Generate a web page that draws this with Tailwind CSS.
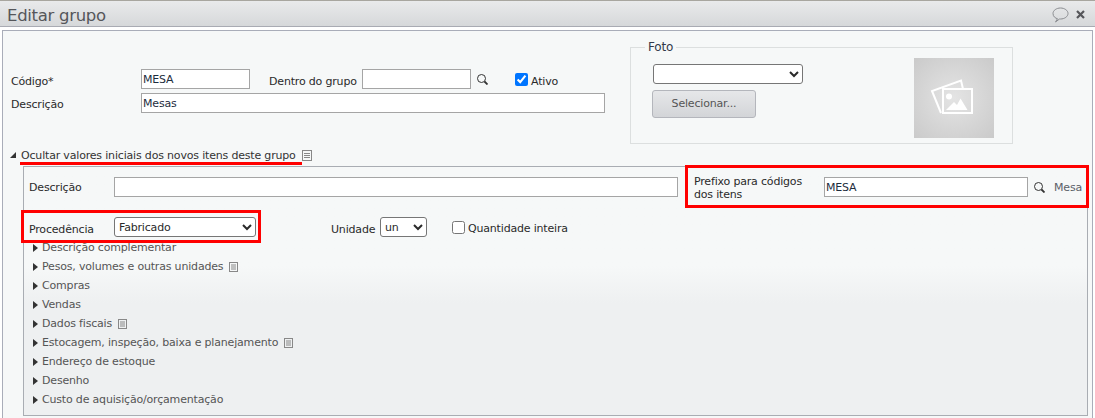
<!DOCTYPE html>
<html lang="pt-BR">
<head>
    <meta charset="UTF-8">
    <title>Editar grupo</title>
    <script src="https://cdn.jsdelivr.net/npm/@tailwindcss/browser@4"></script>
</head>
<body class="bg-white overflow-hidden h-[418px] font-['DejaVu_Sans',sans-serif] text-[11px] tracking-[-0.18px] text-[#2a2a2a]">
    <!-- barra de titulo -->
    <div class="h-[27px] border-t border-t-[#a8a69f] border-b border-b-[#a9abb3] bg-gradient-to-b from-[#e9eaeb] to-[#d6d8da] flex items-center pl-[7px] pr-[10px]">
        <span class="text-[16.5px] tracking-[-0.3px] mt-[6px] text-[#55565a]">Editar grupo</span>
        <div class="ml-auto flex items-center gap-[7px] mt-[2px]">
            <svg width="17" height="16" viewBox="0 0 17 16" fill="none" stroke="#8a8c90"><path d="M8.500 1C4.500 1 1 3.400 1 6.500s2.600 4.900 4.500 5.200L3.500 15l4-3h1c4 0 7.500-2.400 7.500-5.500S12.500 1 8.500 1z"/></svg>
            <svg width="9" height="9" viewBox="0 0 9 9" stroke="#55565a" stroke-width="2.200"><path d="M1 1l7 7M8 1l-7 7"/></svg>
        </div>
    </div>

    <div class="mt-[3px] ml-[2px] w-[1091px] h-[388px] border border-b-0 border-[#a9adb9] bg-[#f6f8f8]">
        <div class="flex h-[116px]">
            <div class="w-[627px] pl-[8px] pt-[38px]">
                <div class="flex items-center h-[20px]">
                    <span class="w-[130px] mt-[6px]">Código*</span>
                    <input value="MESA" class="w-[109px] h-[20px] border border-[#a5a5a5] bg-white px-[1px] text-[#1d2d3d] text-[11px]">
                    <span class="ml-[19px] w-[93px] mt-[6px]">Dentro do grupo</span>
                    <input class="w-[109px] h-[20px] border border-[#a5a5a5] bg-white">
                    <svg class="ml-[6px]" width="11" height="11" viewBox="0 0 11 11" fill="none" stroke="#333"><circle cx="4.500" cy="4.500" r="4"/><path d="M7.500 7.500l3 3" stroke-width="1.800"/></svg>
                    <input type="checkbox" checked class="ml-[27px] w-[13px] h-[13px] m-0">
                    <span class="ml-[3px] mt-[6px]">Ativo</span>
                </div>
                <div class="flex items-center h-[20px] mt-[4px]">
                    <span class="w-[130px] mt-[5px]">Descrição</span>
                    <input value="Mesas" class="w-[464px] h-[20px] border border-[#a5a5a5] bg-white px-[1px] text-[#1d2d3d] text-[11px]">
                </div>
            </div>
            <fieldset class="mt-[7px] w-[383px] h-[106px] border border-[#dcdfdf] relative">
                <legend class="ml-[14px] px-[3px] text-[12px] text-[#333a4a]">Foto</legend>
                <div class="pl-[22px] pt-[8px]">
                    <select class="block w-[150px] h-[20px] border border-[#767676] rounded-[3px] bg-white"></select>
                    <button class="block mt-[6px] -ml-[1px] w-[104px] h-[28px] border border-[#b4b6bc] rounded-[3px] bg-gradient-to-b from-[#e6e7e9] to-[#d3d5d8] text-[#555]">Selecionar...</button>
                </div>
                <div class="absolute left-[283px] top-[2px] w-[80px] h-[80px] bg-[radial-gradient(circle,#e4e4e4,#cacaca)]">
                    <svg width="80" height="80" viewBox="0 0 80 80" fill="none" stroke="#fff" stroke-width="2">
                        <path d="M27 55L18 33 47 22.500 49 31"/>
                        <rect x="29" y="31" width="29" height="24"/>
                        <circle cx="35" cy="38.500" r="3" fill="#fff" stroke="none"/>
                        <path d="M32 52l8-8 3 3 3.500-6.500 7 11.500z" fill="#fff" stroke="none"/>
                    </svg>
                </div>
            </fieldset>
        </div>

        <!-- valores iniciais -->
        <div class="flex items-center h-[16px] ml-[7px]">
            <span class="w-0 h-0 border-l-[6px] border-l-transparent border-b-[6px] border-b-[#333]"></span>
            <span class="ml-[5px] mt-[2px] text-[#333]">Ocultar valores iniciais dos novos itens deste grupo</span>
            <svg class="ml-[6px] mt-[1px]" width="10" height="11" viewBox="0 0 10 11" fill="none" stroke="#888"><rect x=".5" y=".5" width="9" height="10"/><path d="M2 3.500h6M2 5.500h6M2 7.500h6"/></svg>
        </div>
        <div class="ml-[20px] mt-[3px] w-[1065px] h-[250px] border border-[#a9adb3] bg-gradient-to-b from-[#f6f8f8] from-40% to-[#eef0f1] to-55%">
            <div class="flex items-center mt-[10px] pl-[5px] h-[20px]">
                <span class="w-[85px] mt-[2px]">Descrição</span>
                <input class="w-[564px] h-[20px] border border-[#a5a5a5] bg-white">
                <span class="ml-[16px] w-[130px] leading-[13px] mt-[2px]">Prefixo para códigos<br>dos itens</span>
                <input value="MESA" class="w-[204px] h-[20px] border border-[#a5a5a5] bg-white px-[1px] text-[#1d2d3d] text-[11px]">
                <svg class="ml-[6px]" width="11" height="11" viewBox="0 0 11 11" fill="none" stroke="#333"><circle cx="4.500" cy="4.500" r="4"/><path d="M7.500 7.500l3 3" stroke-width="1.800"/></svg>
                <span class="ml-[9px] mt-[2px] text-[#5a6068]">Mesa</span>
            </div>
            <div class="flex items-center mt-[20px] pl-[5px] h-[20px]">
                <span class="w-[85px] mt-[7px]">Procedência</span>
                <select class="w-[142px] h-[20px] border border-[#767676] rounded-[3px] bg-white text-[11px]"><option>Fabricado</option></select>
                <span class="ml-[75px] w-[49px] mt-[6px]">Unidade</span>
                <select class="w-[47px] h-[20px] border border-[#767676] rounded-[3px] bg-white text-[11px]"><option>un</option></select>
                <input type="checkbox" class="ml-[25px] w-[13px] h-[13px] m-0">
                <span class="ml-[3px] mt-[5px]">Quantidade inteira</span>
            </div>
            <ul class="mt-[1px] pl-[9px] text-[#555]">
                <li class="flex items-center h-[19px]"><span class="w-0 h-0 border-y-[4px] border-y-transparent border-l-[5px] border-l-[#333] mr-[4px]"></span><span class="mt-[2px]">Descrição complementar</span></li>
                <li class="flex items-center h-[19px]"><span class="w-0 h-0 border-y-[4px] border-y-transparent border-l-[5px] border-l-[#333] mr-[4px]"></span><span class="mt-[2px]">Pesos, volumes e outras unidades</span><svg class="ml-[6px]" width="9" height="10" viewBox="0 0 9 10" fill="none" stroke="#888"><rect x=".5" y=".5" width="8" height="9"/><path d="M2 3h5M2 5h5M2 7h5"/></svg></li>
                <li class="flex items-center h-[19px]"><span class="w-0 h-0 border-y-[4px] border-y-transparent border-l-[5px] border-l-[#333] mr-[4px]"></span><span class="mt-[2px]">Compras</span></li>
                <li class="flex items-center h-[19px]"><span class="w-0 h-0 border-y-[4px] border-y-transparent border-l-[5px] border-l-[#333] mr-[4px]"></span><span class="mt-[2px]">Vendas</span></li>
                <li class="flex items-center h-[19px]"><span class="w-0 h-0 border-y-[4px] border-y-transparent border-l-[5px] border-l-[#333] mr-[4px]"></span><span class="mt-[2px]">Dados fiscais</span><svg class="ml-[6px]" width="9" height="10" viewBox="0 0 9 10" fill="none" stroke="#888"><rect x=".5" y=".5" width="8" height="9"/><path d="M2 3h5M2 5h5M2 7h5"/></svg></li>
                <li class="flex items-center h-[19px]"><span class="w-0 h-0 border-y-[4px] border-y-transparent border-l-[5px] border-l-[#333] mr-[4px]"></span><span class="mt-[2px]">Estocagem, inspeção, baixa e planejamento</span><svg class="ml-[6px]" width="9" height="10" viewBox="0 0 9 10" fill="none" stroke="#888"><rect x=".5" y=".5" width="8" height="9"/><path d="M2 3h5M2 5h5M2 7h5"/></svg></li>
                <li class="flex items-center h-[19px]"><span class="w-0 h-0 border-y-[4px] border-y-transparent border-l-[5px] border-l-[#333] mr-[4px]"></span><span class="mt-[2px]">Endereço de estoque</span></li>
                <li class="flex items-center h-[19px]"><span class="w-0 h-0 border-y-[4px] border-y-transparent border-l-[5px] border-l-[#333] mr-[4px]"></span><span class="mt-[2px]">Desenho</span></li>
                <li class="flex items-center h-[19px]"><span class="w-0 h-0 border-y-[4px] border-y-transparent border-l-[5px] border-l-[#333] mr-[4px]"></span><span class="mt-[2px]">Custo de aquisição/orçamentação</span></li>
            </ul>
        </div>
    </div>

    <!-- marcacoes vermelhas sobre a tela -->
    <div class="absolute left-[20px] top-[162px] w-[282px] h-[3px] bg-[#f00]"></div>
    <div class="absolute left-[685px] top-[165px] w-[404px] h-[43px] border-[3px] border-[#f00]"></div>
    <div class="absolute left-[21px] top-[210px] w-[240px] h-[33px] border-[3px] border-[#f00]"></div>
</body>
</html>
